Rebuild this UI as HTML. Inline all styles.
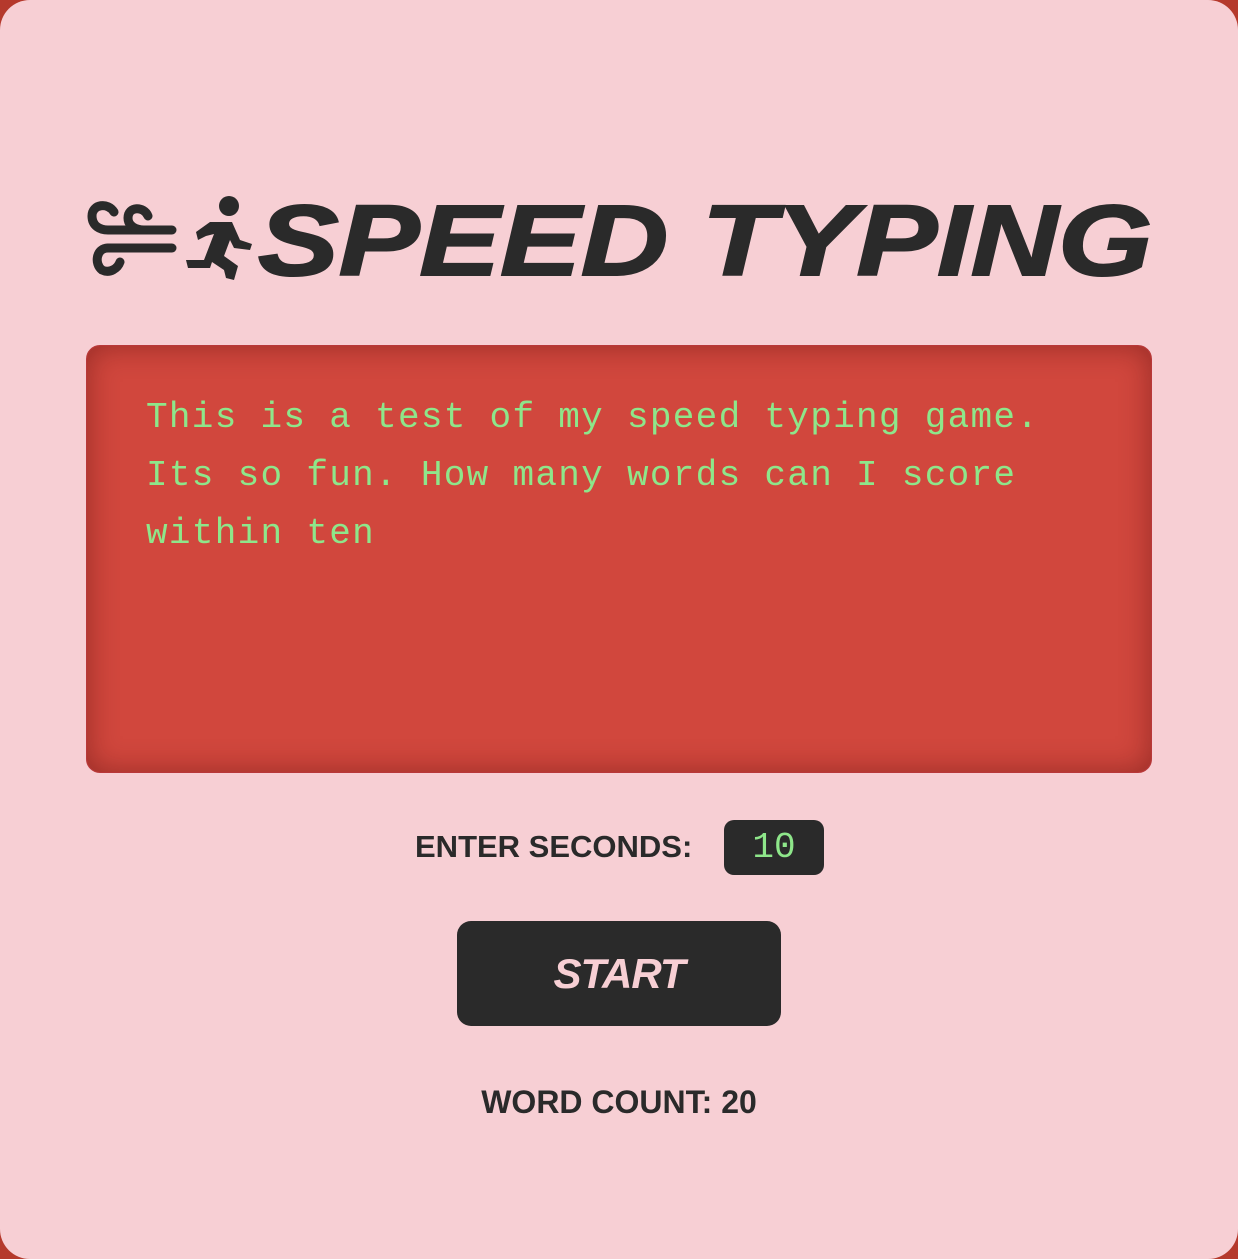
<!DOCTYPE html>
<html><head><meta charset="utf-8"><style>
html,body{margin:0;padding:0;}
body{width:1238px;height:1259px;background:#b5392c;position:relative;overflow:hidden;font-family:"Liberation Sans",sans-serif;}
.page{position:absolute;left:0;top:0;width:1238px;height:1259px;background:#f7cfd4;border-radius:30px;}
.title{position:absolute;left:258px;top:191px;font-size:100px;font-weight:bold;font-style:italic;color:#2a2a2a;white-space:nowrap;letter-spacing:0px;line-height:1;transform-origin:0 0;transform:scaleX(1.21);-webkit-text-stroke:2px #2a2a2a;}
.ta{position:absolute;left:86px;top:345px;width:1064px;height:426px;background:#d1473d;border:1px solid #b8383a;border-radius:14px;box-shadow:inset 0 0 30px rgba(80,10,10,.45);}
.txt{position:absolute;left:146px;top:389px;width:960px;font-family:"Liberation Mono",monospace;font-size:36px;letter-spacing:1.3px;line-height:58px;color:#8ee68a;}
.lbl{position:absolute;font-weight:bold;color:#2a2a2a;font-size:31px;}
.num{position:absolute;left:724px;top:820px;width:100px;height:55px;background:#2a2a2a;border-radius:10px;color:#8ee68a;font-family:"Liberation Mono",monospace;font-size:36px;line-height:55px;text-align:center;}
.btn{position:absolute;left:457px;top:921px;width:324px;height:105px;background:#2a2a2a;border-radius:14px;color:#f7cfd4;font-weight:bold;font-style:italic;font-size:42px;line-height:105px;text-align:center;letter-spacing:-1px;}
</style></head><body>
<div class="page">
<svg style="position:absolute;left:84px;top:192px" width="172" height="92" viewBox="0 0 172 92">
 <g fill="none" stroke="#2a2a2a" stroke-width="9" stroke-linecap="round">
  <path d="M30 20 C24 10 8 12 8 24 C8 34 16 38 24 38 H88"/>
  <path d="M64 24 C60 14 44 14 44 26 C44 34 52 38 60 38"/>
  <path d="M24 56 H88"/>
  <path d="M24 56 C12 56 10 72 18 78 C26 82 34 76 36 70"/>
 </g>
 <g fill="#2a2a2a">
  <circle cx="145" cy="14" r="10"/>
  <path d="M112 40 L126 30 L148 30 L156 48 L168 52 L166 58 L150 56 L146 48 L140 64 L154 74 L150 88 L142 86 L140 78 L128 70 L126 76 L104 76 L102 68 L120 68 L130 42 L122 44 L114 48 Z"/>
 </g>
</svg>
<div class="title">SPEED TYPING</div>
<div class="ta"></div>
<div class="txt">This is a test of my speed typing game. Its so fun. How many words can I score within ten</div>
<div class="lbl" style="left:415px;top:829px;">ENTER SECONDS:</div>
<div class="num">10</div>
<div class="btn">START</div>
<div class="lbl" style="left:0;width:1238px;text-align:center;top:1084px;font-size:32px;">WORD COUNT: 20</div>
</div>
</body></html>
